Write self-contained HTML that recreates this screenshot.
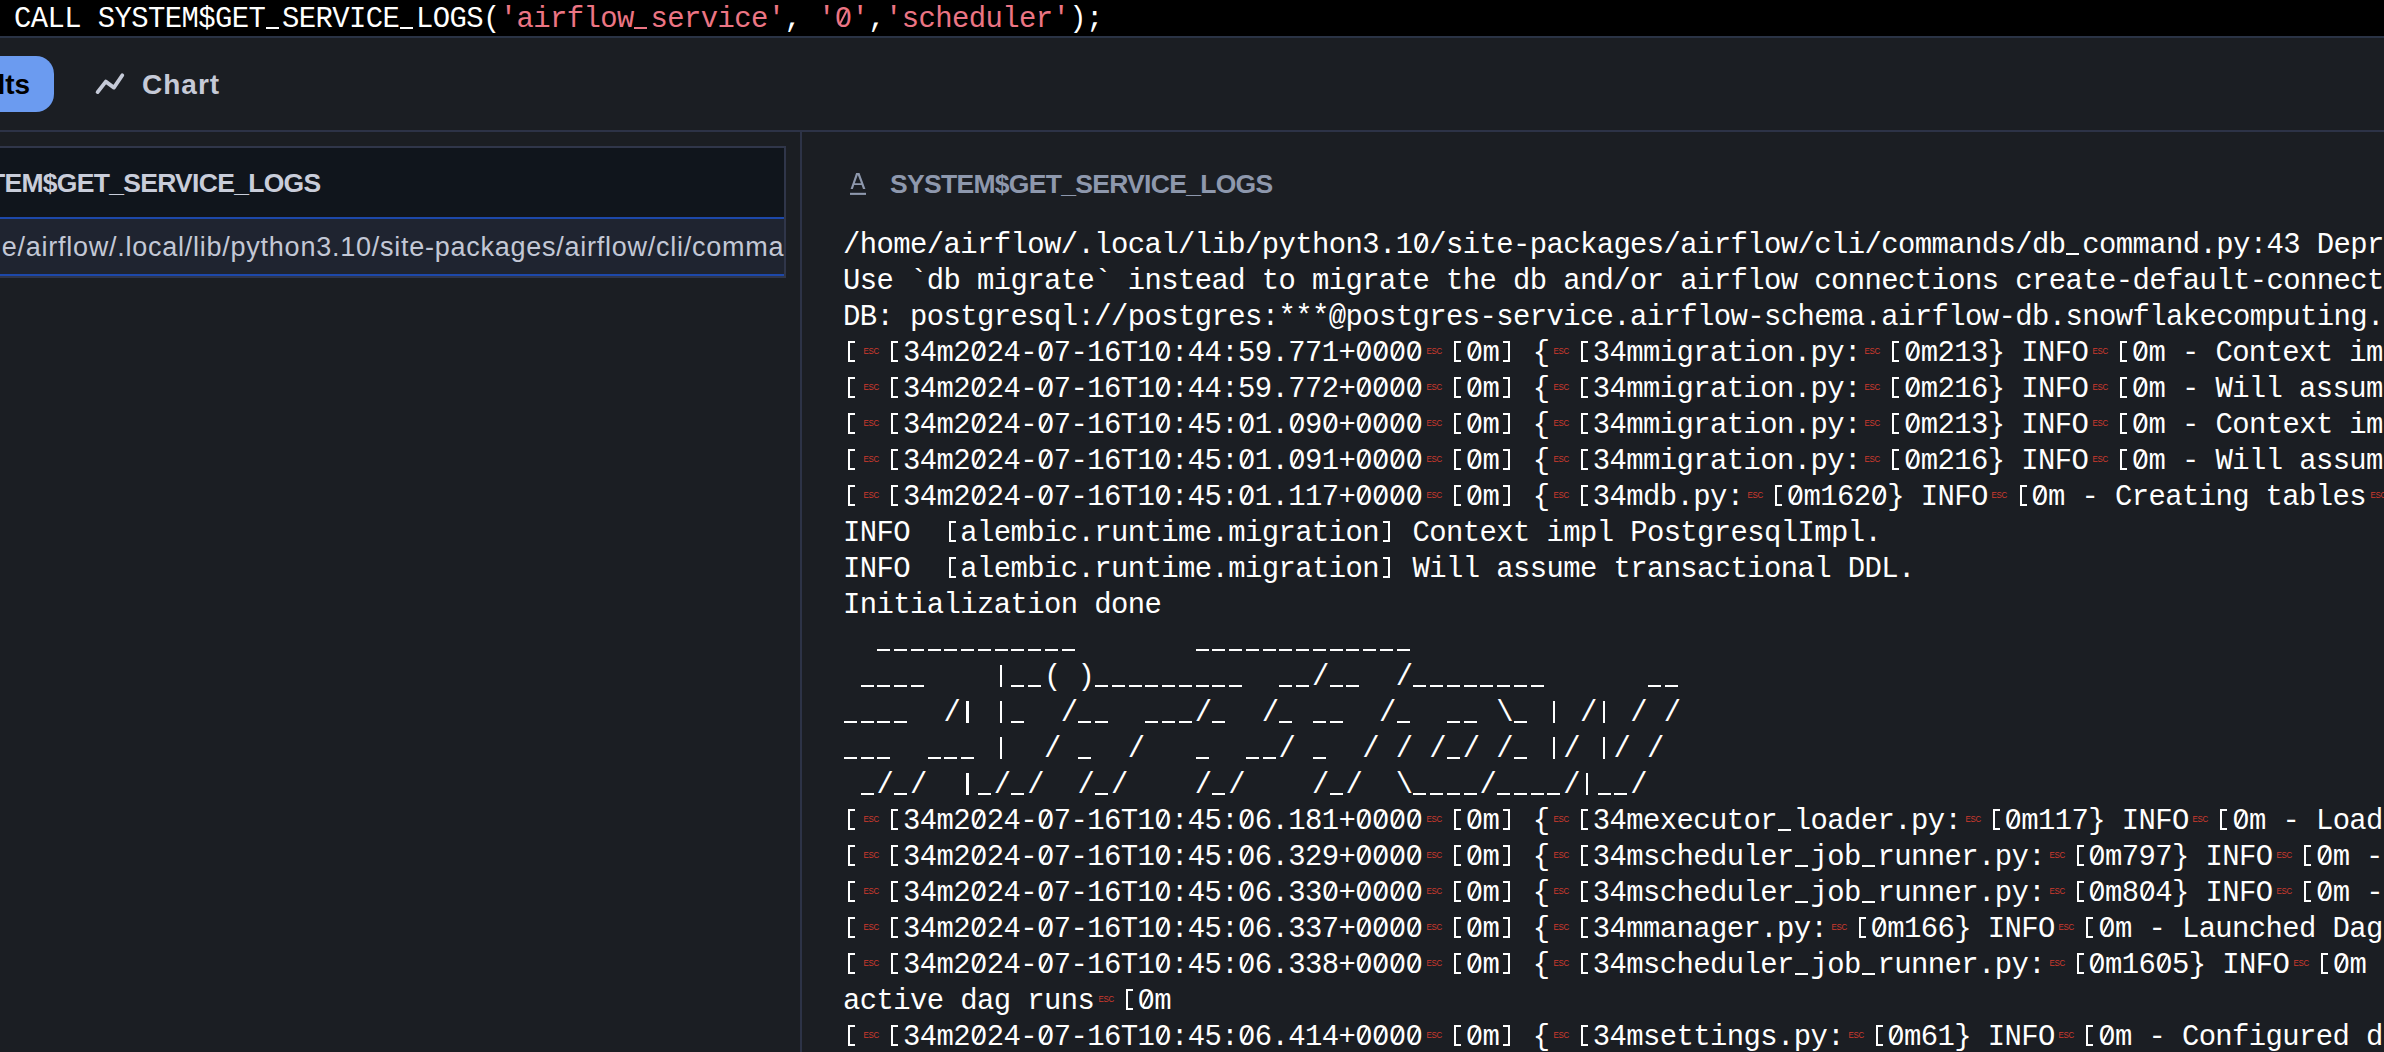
<!DOCTYPE html>
<html><head><meta charset="utf-8">
<style>
html,body{margin:0;padding:0;width:2384px;height:1052px;overflow:hidden;background:#1b1e23;}
*{box-sizing:border-box;}
.top{position:absolute;left:0;top:0;width:2384px;height:36px;background:#000;}
.topb{position:absolute;left:0;top:36px;width:2384px;height:2px;background:#2a3345;}
.sql{position:absolute;left:14px;top:2px;font-family:"Liberation Mono",monospace;font-size:28.9px;letter-spacing:-0.59px;line-height:36px;color:#fff;white-space:pre;}
.sql .s{color:#ec7584;}
.pill{position:absolute;left:-60px;top:56px;width:114px;height:56px;background:#6b9bf0;border-radius:18px;}
.pilltxt{position:absolute;left:-71px;top:57px;height:56px;line-height:56px;font-family:"Liberation Sans",sans-serif;font-weight:bold;font-size:28px;color:#000;white-space:pre;}
.charticon{position:absolute;left:85px;top:65px;width:50px;height:35px;}
.chart{position:absolute;left:142px;top:56.5px;height:56px;line-height:56px;font-family:"Liberation Sans",sans-serif;font-weight:bold;font-size:28px;color:#c6cad7;letter-spacing:1px;white-space:pre;}
.hdiv{position:absolute;left:0;top:130px;width:2384px;height:2px;background:#2d3347;}
.vdiv{position:absolute;left:800px;top:132px;width:2px;height:920px;background:#2d3347;}
.tbl{position:absolute;left:-10px;top:146px;width:796px;height:132px;border:2px solid #30364a;border-left:none;overflow:hidden;}
.th{position:absolute;left:0;top:0;width:100%;height:70px;background:#10151c;}
.bl1{position:absolute;left:0;top:69px;width:100%;height:2px;background:#1d48aa;}
.td{position:absolute;left:0;top:71px;width:100%;height:57px;background:#1f2430;}
.bl2{position:absolute;left:0;top:126px;width:100%;height:2px;background:#1d48aa;}
.thtxt{position:absolute;top:0;height:70px;line-height:70px;font-family:"Liberation Sans",sans-serif;font-weight:bold;font-size:26.5px;letter-spacing:-0.7px;color:#c9cdda;white-space:pre;}
.tdtxt{position:absolute;top:71px;height:57px;line-height:57px;font-family:"Liberation Sans",sans-serif;font-size:27px;letter-spacing:0.75px;color:#c3c8d6;white-space:pre;}
.rh{position:absolute;left:890px;top:148px;height:72px;line-height:72px;font-family:"Liberation Sans",sans-serif;font-weight:bold;font-size:26.5px;letter-spacing:-0.7px;color:#8e98ad;white-space:pre;}
.aicon{position:absolute;left:849px;top:170px;width:18px;height:26px;}
.logs{position:absolute;left:843px;top:228px;width:1541px;height:825px;overflow:hidden;font-family:"Liberation Mono",monospace;font-size:28.9px;letter-spacing:-0.59px;line-height:36px;color:#fff;white-space:pre;}
.logs i{display:inline-block;width:26.6px;height:10px;position:relative;}
.logs i::before{content:"ESC";position:absolute;left:-1.4px;width:26.6px;text-align:center;top:-5.0px;font-family:"Liberation Sans",sans-serif;font-style:normal;font-size:9.6px;line-height:10px;color:#d03a2e;letter-spacing:-0.2px;transform:scaleX(0.82);}
.m u,.m s{display:inline-block;width:16.753px;height:0;position:relative;text-decoration:none;}
.m u::after{content:"";position:absolute;left:0.8px;top:-0.1px;width:13px;height:2.2px;background:currentColor;}
.m s::after{content:"";position:absolute;left:6.2px;top:-20.4px;width:2.3px;height:21.9px;background:currentColor;}
.m em{font-style:normal;position:relative;}
.m em::before{content:"";position:absolute;left:6.1px;top:11.5px;width:5px;height:6px;background:#1b1e23;}
.sql em::before{background:#000;}
.m em::after{content:"";position:absolute;left:0.15px;top:13.45px;width:17px;height:2.2px;background:currentColor;transform:rotate(-62.7deg);}
.m ins,.m del{display:inline-block;width:16.753px;height:0;position:relative;text-decoration:none;}
.m ins::after,.m del::after{content:"";position:absolute;top:-20.3px;height:21.6px;width:7px;border:2.4px solid currentColor;box-sizing:border-box;}
.m ins::after{left:5.1px;border-right:none;}
.m del::after{left:3.8px;border-left:none;}
</style></head><body>
<div class="top"><div class="sql m">CALL SYSTEM$GET<u></u>SERVICE<u></u>LOGS(<span class="s">&#x27;airflow<u></u>service&#x27;</span>, <span class="s">&#x27;<em>0</em>&#x27;</span>,<span class="s">&#x27;scheduler&#x27;</span>);</div></div>
<div class="topb"></div>
<div class="pill"></div>
<div class="pilltxt">Results</div>
<svg class="charticon" viewBox="85 65 50 35"><polyline points="97.6,92.1 105.8,81.6 113.9,87.6 122.3,75.3" fill="none" stroke="#c5cad8" stroke-width="3.8" stroke-linecap="round" stroke-linejoin="round"/></svg>
<div class="chart">Chart</div>
<div class="hdiv"></div>
<div class="vdiv"></div>
<div class="tbl">
 <div class="th"></div>
 <div class="bl1"></div>
 <div class="td"></div>
 <div class="bl2"></div>
 <div class="thtxt" style="left:-52px">SYSTEM$GET_SERVICE_LOGS</div>
 <div class="tdtxt" style="left:11.75px">e/airflow/.local/lib/python3.10/site-packages/airflow/cli/comma</div>
</div>
<svg class="aicon" viewBox="849 170 18 26"><path fill-rule="evenodd" fill="#8e98ad" d="M850.6 189 L856.1 173 L859.5 173 L865.4 189 L863.0 189 L861.6 185.1 L854.2 185.1 L852.9 189 Z M854.8 183.3 L861.0 183.3 L857.8 174.9 Z"/><rect x="850" y="192.8" width="16" height="2.1" fill="#8e98ad"/></svg>
<div class="rh">SYSTEM$GET_SERVICE_LOGS</div>
<div class="logs m">/home/airflow/.local/lib/python3.1<em>0</em>/site-packages/airflow/cli/commands/db<u></u>command.py:43 DeprecationWarning: `db init` is deprecated.
Use `db migrate` instead to migrate the db and/or airflow connections create-default-connections to create the default connections
DB: postgresql://postgres:***@postgres-service.airflow-schema.airflow-db.snowflakecomputing.internal:5432/airflow
<ins></ins><i></i><ins></ins>34m2<em>0</em>24-<em>0</em>7-16T1<em>0</em>:44:59.771+<em>0</em><em>0</em><em>0</em><em>0</em><i></i><ins></ins><em>0</em>m<del></del> {<i></i><ins></ins>34mmigration.py:<i></i><ins></ins><em>0</em>m213} INFO<i></i><ins></ins><em>0</em>m - Context impl PostgresqlImpl.
<ins></ins><i></i><ins></ins>34m2<em>0</em>24-<em>0</em>7-16T1<em>0</em>:44:59.772+<em>0</em><em>0</em><em>0</em><em>0</em><i></i><ins></ins><em>0</em>m<del></del> {<i></i><ins></ins>34mmigration.py:<i></i><ins></ins><em>0</em>m216} INFO<i></i><ins></ins><em>0</em>m - Will assume transactional DDL.
<ins></ins><i></i><ins></ins>34m2<em>0</em>24-<em>0</em>7-16T1<em>0</em>:45:<em>0</em>1.<em>0</em>9<em>0</em>+<em>0</em><em>0</em><em>0</em><em>0</em><i></i><ins></ins><em>0</em>m<del></del> {<i></i><ins></ins>34mmigration.py:<i></i><ins></ins><em>0</em>m213} INFO<i></i><ins></ins><em>0</em>m - Context impl PostgresqlImpl.
<ins></ins><i></i><ins></ins>34m2<em>0</em>24-<em>0</em>7-16T1<em>0</em>:45:<em>0</em>1.<em>0</em>91+<em>0</em><em>0</em><em>0</em><em>0</em><i></i><ins></ins><em>0</em>m<del></del> {<i></i><ins></ins>34mmigration.py:<i></i><ins></ins><em>0</em>m216} INFO<i></i><ins></ins><em>0</em>m - Will assume transactional DDL.
<ins></ins><i></i><ins></ins>34m2<em>0</em>24-<em>0</em>7-16T1<em>0</em>:45:<em>0</em>1.117+<em>0</em><em>0</em><em>0</em><em>0</em><i></i><ins></ins><em>0</em>m<del></del> {<i></i><ins></ins>34mdb.py:<i></i><ins></ins><em>0</em>m162<em>0</em>} INFO<i></i><ins></ins><em>0</em>m - Creating tables<i></i><ins></ins><em>0</em>m
INFO  <ins></ins>alembic.runtime.migration<del></del> Context impl PostgresqlImpl.
INFO  <ins></ins>alembic.runtime.migration<del></del> Will assume transactional DDL.
Initialization done
  <u></u><u></u><u></u><u></u><u></u><u></u><u></u><u></u><u></u><u></u><u></u><u></u>       <u></u><u></u><u></u><u></u><u></u><u></u><u></u><u></u><u></u><u></u><u></u><u></u><u></u>
 <u></u><u></u><u></u><u></u>    <s></s><u></u><u></u>( )<u></u><u></u><u></u><u></u><u></u><u></u><u></u><u></u><u></u>  <u></u><u></u>/<u></u><u></u>  /<u></u><u></u><u></u><u></u><u></u><u></u><u></u><u></u>      <u></u><u></u>
<u></u><u></u><u></u><u></u>  /<s></s> <s></s><u></u>  /<u></u><u></u>  <u></u><u></u><u></u>/<u></u>  /<u></u> <u></u><u></u>  /<u></u>  <u></u><u></u> \<u></u> <s></s> /<s></s> / /
<u></u><u></u><u></u>  <u></u><u></u><u></u> <s></s>  / <u></u>  /   <u></u>  <u></u><u></u>/ <u></u>  / / /<u></u>/ /<u></u> <s></s>/ <s></s>/ /
 <u></u>/<u></u>/  <s></s><u></u>/<u></u>/  /<u></u>/    /<u></u>/    /<u></u>/  \<u></u><u></u><u></u><u></u>/<u></u><u></u><u></u><u></u>/<s></s><u></u><u></u>/
<ins></ins><i></i><ins></ins>34m2<em>0</em>24-<em>0</em>7-16T1<em>0</em>:45:<em>0</em>6.181+<em>0</em><em>0</em><em>0</em><em>0</em><i></i><ins></ins><em>0</em>m<del></del> {<i></i><ins></ins>34mexecutor<u></u>loader.py:<i></i><ins></ins><em>0</em>m117} INFO<i></i><ins></ins><em>0</em>m - Loaded executor: LocalExecutor
<ins></ins><i></i><ins></ins>34m2<em>0</em>24-<em>0</em>7-16T1<em>0</em>:45:<em>0</em>6.329+<em>0</em><em>0</em><em>0</em><em>0</em><i></i><ins></ins><em>0</em>m<del></del> {<i></i><ins></ins>34mscheduler<u></u>job<u></u>runner.py:<i></i><ins></ins><em>0</em>m797} INFO<i></i><ins></ins><em>0</em>m - Starting the scheduler
<ins></ins><i></i><ins></ins>34m2<em>0</em>24-<em>0</em>7-16T1<em>0</em>:45:<em>0</em>6.33<em>0</em>+<em>0</em><em>0</em><em>0</em><em>0</em><i></i><ins></ins><em>0</em>m<del></del> {<i></i><ins></ins>34mscheduler<u></u>job<u></u>runner.py:<i></i><ins></ins><em>0</em>m8<em>0</em>4} INFO<i></i><ins></ins><em>0</em>m - Processing each file at most -1 times
<ins></ins><i></i><ins></ins>34m2<em>0</em>24-<em>0</em>7-16T1<em>0</em>:45:<em>0</em>6.337+<em>0</em><em>0</em><em>0</em><em>0</em><i></i><ins></ins><em>0</em>m<del></del> {<i></i><ins></ins>34mmanager.py:<i></i><ins></ins><em>0</em>m166} INFO<i></i><ins></ins><em>0</em>m - Launched DagFileProcessorManager with pid: 8<em>0</em>
<ins></ins><i></i><ins></ins>34m2<em>0</em>24-<em>0</em>7-16T1<em>0</em>:45:<em>0</em>6.338+<em>0</em><em>0</em><em>0</em><em>0</em><i></i><ins></ins><em>0</em>m<del></del> {<i></i><ins></ins>34mscheduler<u></u>job<u></u>runner.py:<i></i><ins></ins><em>0</em>m16<em>0</em>5} INFO<i></i><ins></ins><em>0</em>m
active dag runs<i></i><ins></ins><em>0</em>m
<ins></ins><i></i><ins></ins>34m2<em>0</em>24-<em>0</em>7-16T1<em>0</em>:45:<em>0</em>6.414+<em>0</em><em>0</em><em>0</em><em>0</em><i></i><ins></ins><em>0</em>m<del></del> {<i></i><ins></ins>34msettings.py:<i></i><ins></ins><em>0</em>m61} INFO<i></i><ins></ins><em>0</em>m - Configured default timezone UTC</div>
</body></html>
